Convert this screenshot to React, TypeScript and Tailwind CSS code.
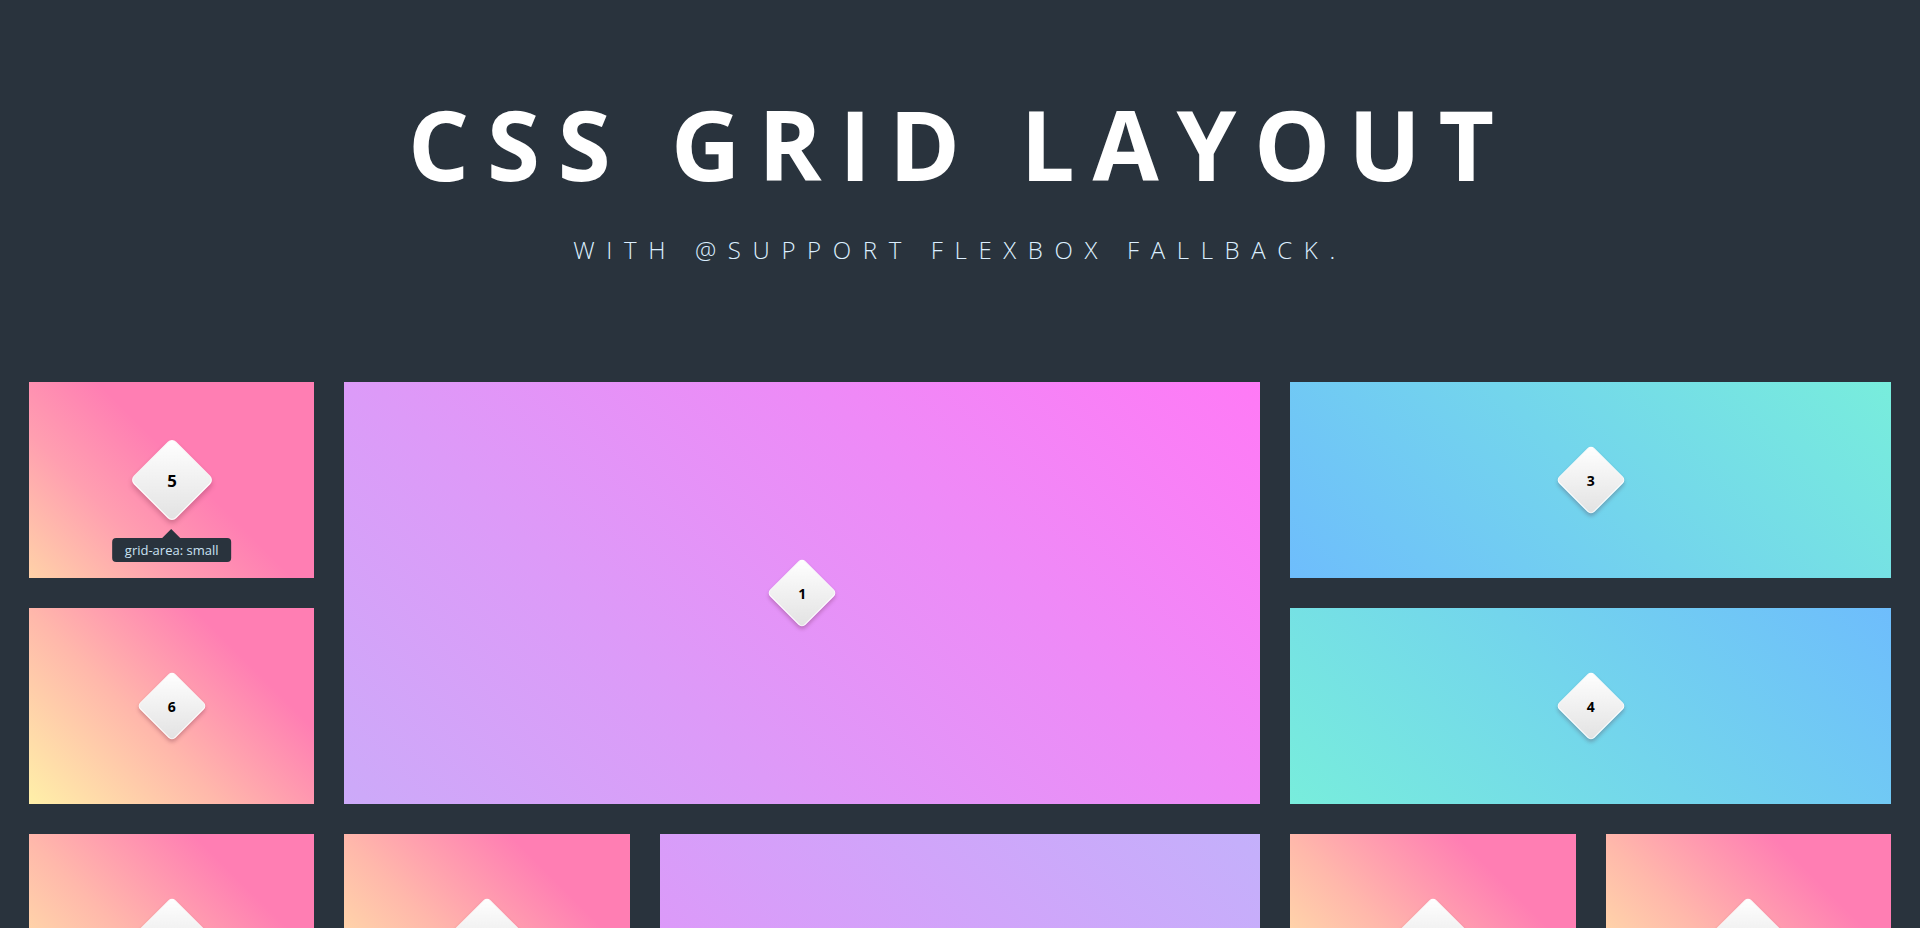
import React from 'react';

const pink = 'bg-[linear-gradient(45deg,#fff0a8_0%,#ffb8ab_40%,#ff7eb3_75%)]';
const pinkHover = 'bg-[linear-gradient(45deg,#ffd2a8_0%,#ff9fb0_30%,#ff7eb3_55%)]';
const purple = 'bg-[linear-gradient(45deg,#ccaaf9_0%,#ff7af6_100%)]';
const purpleRev = 'bg-[linear-gradient(225deg,#c4b0fb_0%,#e78ff8_100%)]';
const blue = 'bg-[linear-gradient(45deg,#6ebdfc_0%,#78eddc_100%)]';
const blueRev = 'bg-[linear-gradient(45deg,#78eddc_0%,#6ebdfc_100%)]';

function Diamond({ label, big }: { label: string; big?: boolean }) {
    return (
        <div className={`relative flex h-[50px] w-[50px] items-center justify-center ${big ? 'scale-[1.2]' : ''}`}>
            <div className="absolute inset-0 rotate-45 rounded-[5px] border border-white/70 bg-[linear-gradient(135deg,#ffffff,#e2e2e2)] shadow-[2px_2px_4px_rgba(80,20,40,0.25)]" />
            <span className="relative text-[14px] font-bold text-black">{label}</span>
        </div>
    );
}

function Tile({ label, bg, className, hovered }: { label: string; bg: string; className?: string; hovered?: boolean }) {
    return (
        <div className={`relative flex items-center justify-center ${bg} ${className ?? ''}`}>
            <Diamond label={label} big={hovered} />
            {hovered && (
                <div className="absolute left-1/2 top-[calc(50%+58px)] -translate-x-1/2">
                    <div className="absolute -top-[9px] left-1/2 h-0 w-0 -translate-x-1/2 border-x-[9px] border-b-[9px] border-x-transparent border-b-[#29333d]" />
                    <div className="whitespace-nowrap rounded-[4px] bg-[#29333d] px-[13px] py-[3px] text-[13px] leading-[18px] text-[#c9e2f3]">
                        grid-area: small
                    </div>
                </div>
            )}
        </div>
    );
}

export default function App() {
    return (
        <div className="min-h-screen bg-[#29333d] font-['Open_Sans','Noto_Sans',sans-serif] pb-[30px]">
            <header className="flex flex-col items-center pt-[96px]">
                <h1 className="text-[96px] font-bold leading-none tracking-[0.185em] text-white">CSS GRID LAYOUT</h1>
                <p className="mt-[46px] text-[24px] font-light leading-none tracking-[0.485em] text-[#dcefff]">
                    WITH @SUPPORT FLEXBOX FALLBACK.
                </p>
            </header>

            <main className="mt-[120px] grid grid-cols-6 auto-rows-[196px] gap-[30px] px-[29px]">
                <Tile label="5" bg={pinkHover} className="col-start-1 row-start-1" hovered />
                <Tile label="1" bg={purple} className="col-start-2 col-span-3 row-start-1 row-span-2" />
                <Tile label="3" bg={blue} className="col-start-5 col-span-2 row-start-1" />
                <Tile label="6" bg={pink} className="col-start-1 row-start-2" />
                <Tile label="4" bg={blueRev} className="col-start-5 col-span-2 row-start-2" />

                <Tile label="7" bg={pink} className="col-start-1 row-start-3" />
                <Tile label="8" bg={pink} className="col-start-2 row-start-3" />
                <Tile label="9" bg={purpleRev} className="col-start-3 col-span-2 row-start-3 row-span-2" />
                <Tile label="11" bg={pink} className="col-start-5 row-start-3" />
                <Tile label="12" bg={pink} className="col-start-6 row-start-3" />

                <Tile label="2" bg={blue} className="col-start-1 col-span-2 row-start-4" />
                <Tile label="10" bg={blueRev} className="col-start-5 col-span-2 row-start-4" />
            </main>
        </div>
    );
}
